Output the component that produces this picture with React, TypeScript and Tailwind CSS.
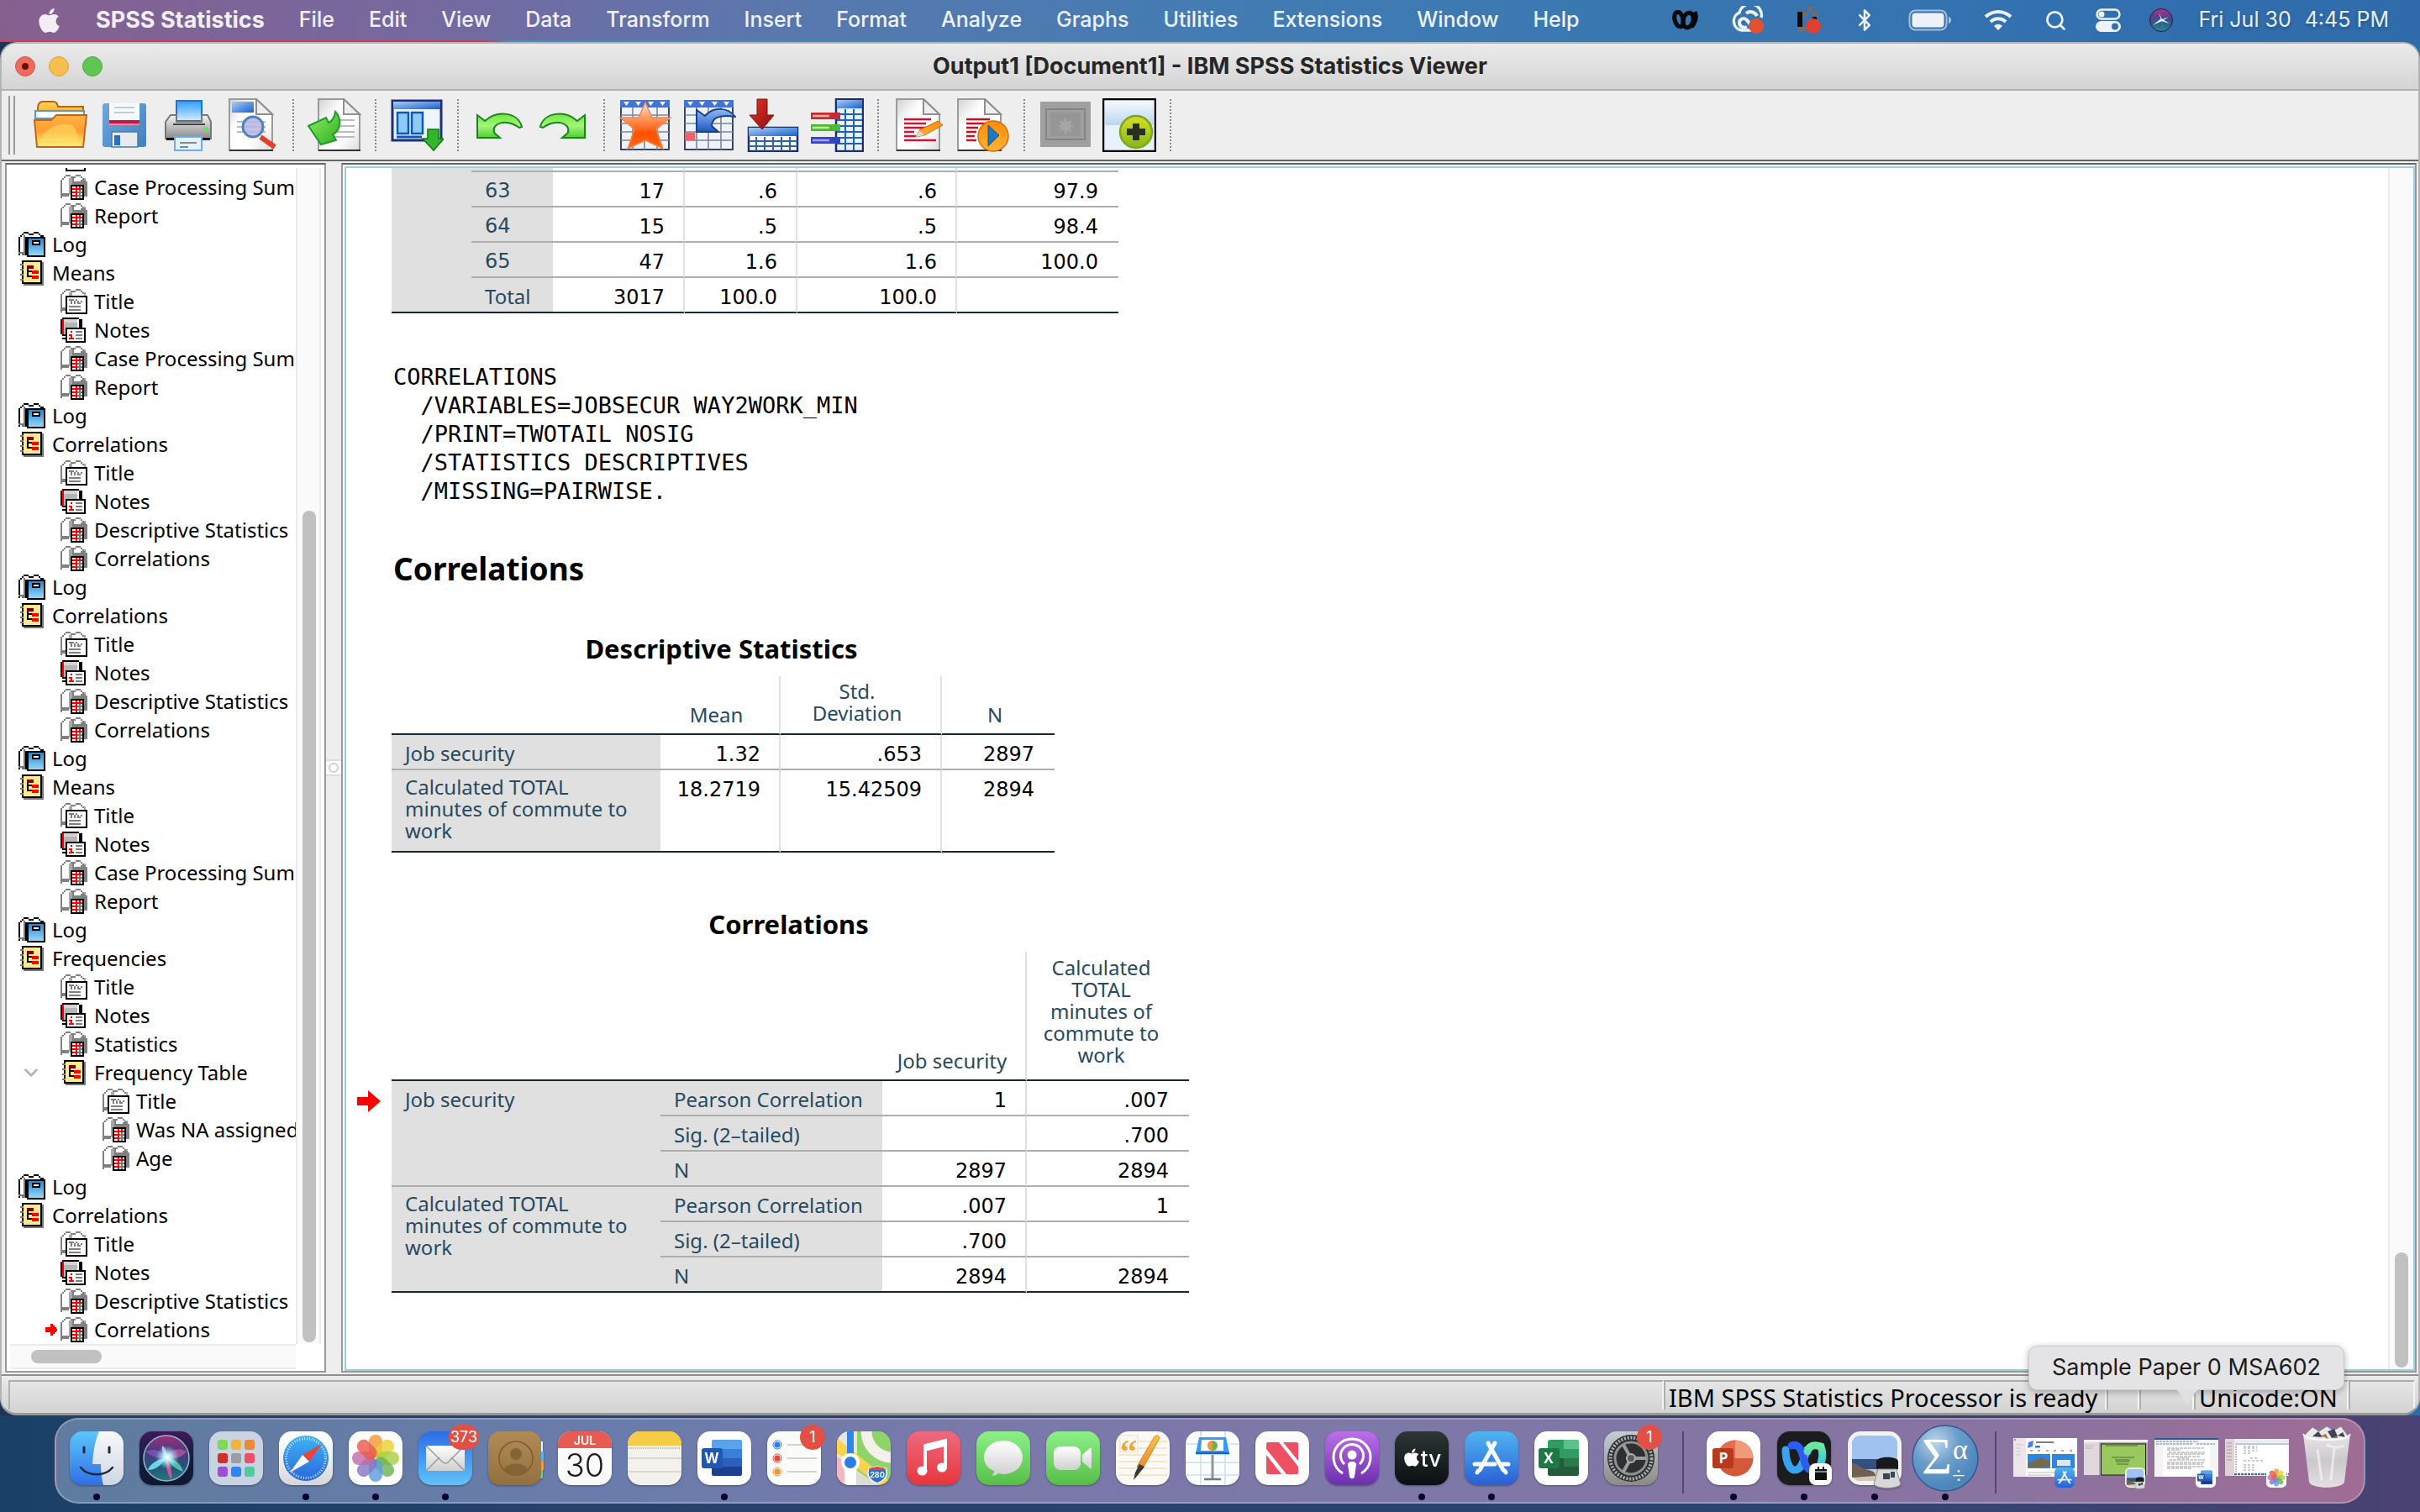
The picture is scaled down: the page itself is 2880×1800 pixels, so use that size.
import React from "react";
import { FaApple } from "react-icons/fa";
import { Bluetooth, Search, ChevronDown } from "lucide-react";

const SANS = "font-['Noto_Sans','DejaVu_Sans',sans-serif]";
const UI = "font-['Inter','Liberation_Sans',sans-serif]";
const NUM = "font-['DejaVu_Sans','Noto_Sans',sans-serif]";

function Grad({ id, stops, diag }: { id: string; stops: string[]; diag?: boolean }) {
  return (
    <linearGradient id={id} x1="0" y1="0" x2={diag ? "1" : "0"} y2="1">
      {stops.map((c, i) => (
        <stop key={i} offset={i / (stops.length - 1)} stopColor={c} />
      ))}
    </linearGradient>
  );
}

function Defs() {
  return (
    <svg width="0" height="0" className="absolute" aria-hidden="true">
      <defs>
        <Grad id="g-orange" stops={["#ffb347", "#ff9d2e", "#fff27a"]} />
        <Grad id="g-tab" stops={["#ffd75a", "#ff9a1f"]} />
        <Grad id="g-save" stops={["#6fa8dc", "#3f82bf"]} diag />
        <Grad id="g-page" stops={["#d0d0d0", "#ffffff", "#ffffff", "#dcdcdc"]} diag />
        <Grad id="g-blue" stops={["#8ecbff", "#2f8fe6"]} />
        <Grad id="g-bar" stops={["#a9cdf5", "#1761cf"]} diag />
        <Grad id="g-paper" stops={["#2f9bff", "#d7ecff"]} />
        <Grad id="g-green" stops={["#8cf05a", "#2fae28"]} diag />
        <Grad id="g-undo-arrow" stops={["#6fe83c", "#a4f57a", "#4fd02a"]} />
        <Grad id="g-star" stops={["#ffe9dd", "#ff9b63", "#ff5200", "#ff6a1a"]} />
        <Grad id="g-red" stops={["#e4342c", "#8d0f0b"]} diag />
        <Grad id="g-undo" stops={["#8fb8f2", "#1f56c4"]} />
        <Grad id="g-play" stops={["#ff8a00", "#ffb53a"]} />
        <Grad id="g-lime" stops={["#d5e021", "#86b81c"]} />
        <Grad id="g-sky" stops={["#f4f9ff", "#bcd6f0"]} />
        <Grad id="g-print" stops={["#f4f4f4", "#8a8a8a"]} />
        <Grad id="g-finder" stops={["#5cc6fa", "#2f6fe8"]} />
        <Grad id="g-face" stops={["#f7f8fa", "#cfd6e2"]} />
        <Grad id="g-siri" stops={["#3d1a5c", "#12203c", "#0d1730"]} />
        <Grad id="g-orb" stops={["#b8327f", "#5a3f92", "#2b5f8c", "#2a8f92"]} />
        <radialGradient id="g-glow">
          <stop offset="0" stopColor="#ffffff" />
          <stop offset=".35" stopColor="#c9fbff" stopOpacity=".85" />
          <stop offset="1" stopColor="#7fe9f0" stopOpacity="0" />
        </radialGradient>
        <Grad id="g-safari" stops={["#3fb3f5", "#2868dc"]} />
        <Grad id="g-white" stops={["#ffffff", "#f1f1f1", "#d6d6d6"]} />
        <Grad id="g-mail" stops={["#2e6ce6", "#5fc3f8"]} />
        <Grad id="g-env" stops={["#ffffff", "#cfcfcf"]} />
        <Grad id="g-brown" stops={["#b08b55", "#94703f"]} />
        <Grad id="g-music" stops={["#ef6a80", "#e6363c"]} />
        <Grad id="g-msg" stops={["#8cf089", "#57bf47"]} />
        <Grad id="g-pod" stops={["#bd6fe8", "#6d2fae"]} />
        <Grad id="g-tv" stops={["#2c3634", "#0b0f12"]} />
        <Grad id="g-store" stops={["#4fb5f0", "#2a5fd6"]} />
        <Grad id="g-gear" stops={["#c3cdd2", "#8b8a86"]} />
        <radialGradient id="g-sigma" cx=".35" cy=".25" r=".7">
          <stop offset="0" stopColor="#bcd6ec" />
          <stop offset=".5" stopColor="#6c9dcb" />
          <stop offset="1" stopColor="#4c86bb" />
        </radialGradient>
        <Grad id="g-webex2" stops={["#6fe89a", "#39c8e8"]} />
        <Grad id="g-log" stops={["#2f86cc", "#92d8fa"]} />
        <Grad id="g-pen" stops={["#ffc43a", "#e8862a"]} />
        <Grad id="g-trash" stops={["#efefef", "#cfcfcf", "#e8e8e8"]} />
      </defs>
    </svg>
  );
}

/* ---------- menu bar ---------- */

const MENUS = ["File", "Edit", "View", "Data", "Transform", "Insert", "Format", "Analyze", "Graphs", "Utilities", "Extensions", "Window", "Help"];

function MenuBar() {
  return (
    <header
      className={`flex h-12 shrink-0 items-center bg-[linear-gradient(100deg,#86608f_0%,#7569a0_18%,#5878ae_33%,#437cb3_50%,#3a78b1_66%,#3370b0_84%,#306cab_100%)] pl-[42px] pr-[37px] text-[25px] text-white/90 [text-shadow:0_2px_4px_rgba(0,0,0,0.3)] ${UI}`}
    >
      <button aria-label="Apple menu" className="mr-[39px]">
        <FaApple className="size-[33px] text-[#f3edf6]" />
      </button>
      <nav className="flex items-center gap-[41px]">
        <button className="text-[27px] font-bold">SPSS Statistics</button>
        {MENUS.map((m) => (
          <button key={m} className="font-medium">{m}</button>
        ))}
      </nav>
      <div className="ml-auto flex items-center gap-[38px]">
        <svg viewBox="0 0 32 24" className="h-6 w-8" fill="none" stroke="#05070c" strokeWidth="5">
          <ellipse cx="9" cy="11" rx="5" ry="9" transform="rotate(-14 9 11)" />
          <ellipse cx="20" cy="12" rx="6" ry="9" transform="rotate(14 20 12)" />
          <path d="M28 2c3 6 0 14-4 18" />
        </svg>
        <svg viewBox="0 0 42 34" className="h-[34px] w-[42px]" fill="none">
          <path d="M30 29H14a11 11 0 0 1-3-21A11 11 0 0 1 37 14" stroke="#eef2f8" strokeWidth="3.4" />
          <path d="M20 25c-5 2-9-1-9-5s5-7 9-3c3 3 4 7 7 8M19 9c5-4 11-1 13 3" stroke="#eef2f8" strokeWidth="4" />
          <circle cx="31" cy="24" r="9" fill="#e2522c" />
        </svg>
        <svg viewBox="0 0 28 34" className="h-[34px] w-7">
          <path d="M0 7h6v18H0zM18 13h5v9h-5z" fill="#0a0a0a" />
          <path d="M12 1h6v6h6v6h-6V7h-6zM6 7h6v6H6zM0 25h10v6H0z" fill="#6d6d6d" />
          <circle cx="19" cy="24" r="9" fill="#e0402f" />
        </svg>
        <Bluetooth className="size-7" strokeWidth={2.2} />
        <svg viewBox="0 0 52 26" className="h-[26px] w-[52px]">
          <rect x="1.5" y="1.5" width="44" height="23" rx="7" fill="none" stroke="#fff" strokeOpacity=".55" strokeWidth="2" />
          <rect x="4.5" y="4.5" width="38" height="17" rx="4" fill="#eef2f8" />
          <path d="M48 9c4 1 4 7 0 8z" fill="#fff" fillOpacity=".6" />
        </svg>
        <svg viewBox="0 0 34 26" className="h-[26px] w-[34px]" fill="none" stroke="#eef2f8" strokeWidth="4">
          <path d="M2 9c9-8 21-8 30 0" />
          <path d="M8 15c5-5 13-5 18 0" />
          <path d="M17 25l-5-5c3-3 7-3 10 0z" fill="#eef2f8" stroke="none" />
        </svg>
        <Search className="size-[27px]" strokeWidth={2.4} />
        <svg viewBox="0 0 30 28" className="-ml-1 h-7 w-[30px]">
          <rect x="1.5" y="1.5" width="27" height="11" rx="5.5" fill="none" stroke="#eef2f8" strokeWidth="2.4" />
          <circle cx="7" cy="7" r="3.5" fill="#eef2f8" />
          <rect y="15" width="30" height="13" rx="6.5" fill="#eef2f8" />
          <circle cx="23" cy="21.5" r="4" fill="#3570ab" />
        </svg>
        <svg viewBox="0 0 28 28" className="-ml-1 size-7">
          <circle cx="14" cy="14" r="13.5" fill="url(#g-orb)" stroke="#2b1d3c" />
          <path d="M4 20 14 12l10 6-10-3 3 11-3-12-3-9 4 8 8-3-8 5z" fill="#d6fbff" />
        </svg>
        <div className="-ml-2 flex gap-4">
          <span>Fri Jul 30</span>
          <span>4:45 PM</span>
        </div>
      </div>
    </header>
  );
}

/* ---------- toolbar ---------- */

const Page = ({ x = 8, w = 52 }: { x?: number; w?: number }) => (
  <g>
    <path d={`M${x} 1h${w - 20}l19 18v43h-${w - 1}z`} fill="url(#g-page)" stroke="#9b9b9b" strokeWidth="2" />
    <path d={`M${x + w - 20} 1v18h19z`} fill="#efefef" stroke="#8f8f8f" strokeWidth="2" />
    <path d={`M${x} 62h${w}`} stroke="#333" strokeWidth="2" />
  </g>
);

const GridSheet = () => (
  <g>
    <rect x="3" y="3" width="57" height="58" fill="#eef3fb" stroke="#3c465e" strokeWidth="2" />
    <path d="M3 30h57M3 40h57M3 50h57M17 11v50M31 11v50M46 11v50M3 20h57" stroke="#7d8797" strokeWidth="1.6" />
    <rect x="2" y="2" width="59" height="9" fill="#3f74dc" />
    <path d="M6 4h7l-3.500 5zM20 4h7l-3.500 5zM35 4h7l-3.500 5zM49 4h7l-3.500 5z" fill="#fff" />
  </g>
);

const UNDO_PATH = "M6 20v27h27l-7-6c-3-12 14-17 30-6l3-1C55 17 30 13 15 27z";

const TOOLS: Record<string, React.ReactNode> = {
  "Open": (
    <g>
      <path d="M5 12c0-6 3-8 6-8h12c4 0 5 2 6 6h30v14H5z" fill="url(#g-tab)" stroke="#b5651d" strokeWidth="2" />
      <path d="M2 15h58v9H2z" fill="#fff" stroke="#4a9be0" strokeWidth="2" />
      <path d="M1 26h20l6-6h36l-4 38H4z" fill="url(#g-orange)" stroke="#c2651a" strokeWidth="2" />
      <path d="M6 55C10 36 30 28 46 32c6 6 8 14 8 23z" fill="#ffe46a" opacity=".55" />
    </g>
  ),
  "Save": (
    <g>
      <rect x="6" y="6" width="52" height="52" rx="3" fill="url(#g-save)" />
      <rect x="14" y="6" width="36" height="26" fill="#f5fafd" />
      <path d="M20 11h24M20 17h24" stroke="#c4cbd1" strokeWidth="2" />
      <path d="M14 28h36" stroke="#cc1144" strokeWidth="4" />
      <path d="M14 31h36" stroke="#ec8fa6" strokeWidth="2" />
      <rect x="17" y="40" width="31" height="18" fill="#e8eaec" stroke="#447caf" strokeWidth="1.5" />
      <rect x="20" y="44" width="7" height="12" fill="#2f6fb5" />
    </g>
  ),
  "Print": (
    <g>
      <rect x="18" y="3" width="30" height="24" fill="url(#g-paper)" stroke="#1877d2" strokeWidth="2" />
      <path d="M11 20h7v8h30v-8h7l4 8v20H5V28z" fill="url(#g-print)" stroke="#777" strokeWidth="2" />
      <path d="M14 30h38v2H14z" fill="#444" />
      <path d="M6 47h52v3H6z" fill="#111" />
      <circle cx="53" cy="36" r="2" fill="#3f3" />
      <rect x="16" y="46" width="32" height="16" fill="#e6f1fb" stroke="#6faee5" strokeWidth="2" />
      <path d="M22 53h20M22 58h10" stroke="#7d8d9d" strokeWidth="2" />
    </g>
  ),
  "Print Preview": (
    <g>
      <Page x={5} w={52} />
      <rect x="8" y="4" width="26" height="13" fill="url(#g-bar)" />
      <path d="M14 28h34M14 34h34M14 40h34" stroke="#bbb" strokeWidth="2" />
      <path d="M42 46l17 12" stroke="#e0402c" strokeWidth="6" />
      <circle cx="33" cy="34" r="12" fill="#b9b5e4" fillOpacity=".85" stroke="#4d83bd" strokeWidth="3" />
    </g>
  ),
  "Export": (
    <g>
      <Page x={13} w={50} />
      <path d="M30 26h26M30 33h26M30 40h26M30 46h26" stroke="#bbb" strokeWidth="2" />
      <path d="M1 33 22 23l3 6c5-2 7-6 8-13 8 8 7 22-3 27l4 7-18 5z" fill="url(#g-green)" stroke="#1e9a2c" strokeWidth="2" />
    </g>
  ),
  "Recall Dialog": (
    <g>
      <rect x="3" y="3" width="58" height="47" fill="#edf6fe" stroke="#1c2f78" strokeWidth="3" />
      <rect x="4" y="4" width="56" height="9" fill="url(#g-bar)" />
      <path d="M9 17h13v25H9zM26 17h13v25H26z" fill="#8fcbf8" stroke="#0c59b8" strokeWidth="2.5" />
      <path d="M8 46h30" stroke="#0c59b8" strokeWidth="3" />
      <path d="M45 37h13v11h6L52 62 39 48h6z" fill="#35b52c" stroke="#0f7a10" strokeWidth="1.5" />
    </g>
  ),
  "Undo": <path d={UNDO_PATH} fill="url(#g-undo-arrow)" stroke="#16861c" strokeWidth="2" />,
  "Redo": <path d={UNDO_PATH} transform="matrix(-1 0 0 1 64 0)" fill="url(#g-undo-arrow)" stroke="#16861c" strokeWidth="2" />,
  "Go to Case": (
    <g>
      <GridSheet />
      <path d="M32 5l8 18h22L45 37l8 23-21-10-21 10 8-23L2 23h22z" fill="url(#g-star)" stroke="#f08850" strokeWidth="1.5" />
    </g>
  ),
  "Go to Data": (
    <g>
      <GridSheet />
      <rect x="3" y="41" width="12" height="9" fill="#f0616c" />
      <path d="M17 14v26h26l-8-7c0-10 10-14 28-11C54 10 37 10 27 21z" fill="url(#g-undo)" stroke="#17418f" strokeWidth="2" />
    </g>
  ),
  "Insert Cases": (
    <g>
      <rect x="3" y="35" width="58" height="28" fill="#fff" stroke="#1b2f6c" strokeWidth="2.5" />
      <rect x="3" y="35" width="58" height="10" fill="url(#g-bar)" />
      <path d="M3 51h58M3 57h58M12 46v17M22 46v17M32 46v17M42 46v17M52 46v17" stroke="#2d62b0" strokeWidth="2" />
      <path d="M13 1h12v19h8L19 37 4 20h9z" fill="url(#g-red)" stroke="#7b100c" />
    </g>
  ),
  "Variables": (
    <g>
      <rect x="31" y="1" width="32" height="62" fill="#e8f3ff" stroke="#1b2f6c" strokeWidth="2.5" />
      <rect x="32" y="2" width="30" height="10" fill="url(#g-bar)" />
      <path d="M32 19h30M32 26h30M32 33h30M32 40h30M32 47h30M32 54h30M42 13v49M52 13v49" stroke="#1f62bd" strokeWidth="2" />
      <rect x="1" y="17" width="35" height="8" fill="#c62a38" />
      <path d="M3 21h20" stroke="#f6b08a" strokeWidth="2.5" />
      <rect x="1" y="31" width="35" height="8" fill="#4cb92e" />
      <path d="M3 35h20" stroke="#b4f49c" strokeWidth="2.5" />
      <rect x="1" y="46" width="35" height="8" fill="#2f46c9" />
      <path d="M3 50h20" stroke="#b49cf4" strokeWidth="2.5" />
    </g>
  ),
  "Edit Script": (
    <g>
      <Page x={5} w={52} />
      <path d="M14 25h32M14 30h26M14 35h30M14 40h12M14 45h14M14 50h38" stroke="#d01236" strokeWidth="2.5" />
      <path d="M28 46l4-8 22-11 6 5-22 12z" fill="url(#g-play)" stroke="#cc6d14" />
      <path d="M28 46l4-8 6 6z" fill="#d8d8d8" />
    </g>
  ),
  "Run Script": (
    <g>
      <Page x={2} w={52} />
      <path d="M12 25h28M12 30h24M12 35h14M12 40h12M12 45h10M12 50h12" stroke="#c8101e" strokeWidth="2.5" />
      <circle cx="44" cy="45" r="18" fill="url(#g-play)" stroke="#d2700c" strokeWidth="1.5" />
      <path d="M38 32l13 12-13 13z" fill="#1f78bb" stroke="#0e568f" />
    </g>
  ),
  "Show Image": (
    <g>
      <rect x="2" y="4" width="60" height="54" fill="#9f9f9f" />
      <rect x="9" y="13" width="46" height="36" fill="none" stroke="#848484" strokeWidth="2" />
      <rect x="14" y="17" width="36" height="28" fill="#969696" />
      <path d="M32 22l2 6 6-2-3 5 6 2-6 2 3 5-6-2-2 6-2-6-6 2 3-5-6-2 6-2-3-5 6 2z" fill="#a6a6a6" />
    </g>
  ),
  "Designate Window": (
    <g>
      <rect x="1" y="1" width="62" height="62" fill="#e8f1fd" stroke="#000" strokeWidth="2.5" />
      <rect x="3" y="3" width="58" height="29" fill="url(#g-sky)" />
      <circle cx="40" cy="40" r="19" fill="url(#g-lime)" stroke="#7fa51b" strokeWidth="2.5" />
      <path d="M36 30h8v6h7v8h-7v6h-8v-6h-7v-8h7z" fill="#2a2d22" />
    </g>
  ),
};

const TOOL_GROUPS = [
  ["Open", "Save", "Print", "Print Preview"],
  ["Export"],
  ["Recall Dialog"],
  ["Undo", "Redo"],
  ["Go to Case", "Go to Data", "Insert Cases", "Variables"],
  ["Edit Script", "Run Script"],
  ["Show Image", "Designate Window"],
];

function Toolbar() {
  return (
    <div className="flex h-[82px] shrink-0 items-center gap-3 bg-[#eeeeee] pl-2" role="toolbar" aria-label="Output toolbar">
      <div className="mr-[10px] h-[70px] w-2 border-x-2 border-[#9a9a9a]" />
      {TOOL_GROUPS.map((group, gi) => (
        <React.Fragment key={gi}>
          {group.map((name) => (
            <button key={name} aria-label={name} className="size-16">
              <svg viewBox="0 0 64 64" className="size-16">{TOOLS[name]}</svg>
            </button>
          ))}
          <div className="mx-1 h-[62px] w-0 border-l-2 border-dotted border-[#8a8a8a]" />
        </React.Fragment>
      ))}
    </div>
  );
}

/* ---------- outline tree ---------- */

type Kind = "log" | "head" | "title" | "notes" | "table";

const binder = "M0 3h1v11H0zM1 2h1v1H1zM2 1h1v1H2zM3 0h3v1H3zM6 1h1v1H6zM9 0h3v1H9zM7 1h2v1H7zM12 1h1v1h-1zM13 2h2v1h-2z";

function TreeIcon({ kind }: { kind: Kind }) {
  return (
    <svg viewBox="0 0 16 15" className="h-[30px] w-8 shrink-0" shapeRendering="crispEdges" aria-hidden="true">
      {kind === "log" && (
        <g>
          <path d="M1 2h4v11H1z" fill="#fff" />
          <path d={binder} fill="#000" />
          <path d="M0 12h4v1H0zM2 13h3v1H2zM3 2h1v10H3z" fill="#777" />
          <path d="M4 3h12v12H5v-1H4z" fill="#000" />
          <path d="M6 4h9v10H6z" fill="url(#g-log)" />
          <path d="M8 5h5v3H8z" fill="#000" />
          <path d="M9 6h3v1H9z" fill="#fff" />
        </g>
      )}
      {kind === "head" && (
        <g>
          <path d="M3 1h12v14H3z" fill="#777" />
          <path d="M2 0h12v14H2z" fill="#000" />
          <path d="M3 1h10v12H3z" fill="#ffe88f" />
          <path d="M1 2h2v1H1zM1 5h2v1H1zM1 8h2v1H1zM1 11h2v1H1z" fill="#777" />
          <path d="M5 3h4v2H5z" fill="#800000" />
          <path d="M5 5h1v5H5zM6 6h2v1H6zM6 9h2v1H6z" fill="#000" />
          <path d="M8 6h4v2H8zM8 9h4v2H8z" fill="#f00" />
        </g>
      )}
      {(kind === "title" || kind === "table") && (
        <g>
          <path d={binder} fill="#808080" />
          <path d="M5 2h2v10H5zM14 2h1v3h-1z" fill="#a8a8a8" />
          <path d="M1 11h4v2H1z" fill="#808080" />
        </g>
      )}
      {kind === "title" && (
        <g>
          <path d="M3 4h13v11H3z" fill="#000" />
          <path d="M4 5h11v9H4z" fill="#fff" />
          <path d="M5 6h3v1H5zM6 7h1v2H6zM8 7h1v2H8zM9 6h1v1H9zM10 7h1v2h-1zM11 8h1v-1h1v1h-1v1h-1zM5 10h7v1H5zM5 12h7v1H5z" fill="#808080" />
        </g>
      )}
      {kind === "table" && (
        <g>
          <path d="M8 4h8v9H8zM7 2h1v8H7zM12 3h3v1h-3z" fill="#808080" />
          <path d="M6 6h8v9H6z" fill="#000" />
          <path d="M7 7h6v7H7z" fill="#fff" />
          <path d="M7 8h6v1H7zM9 7h1v7H9zM7 10h2v1H7zM7 12h2v1H7zM11 7h1v1h-1z" fill="#f00" />
          <path d="M11 9h1v5h-1zM10 10h3v1h-3zM10 12h3v1h-3z" fill="#777" />
        </g>
      )}
      {kind === "notes" && (
        <g>
          <path d="M0 1h1v9H0zM1 0h10v1H1zM11 1h2v5h-2zM1 10h3v1H1zM1 12h2v1H1z" fill="#000" />
          <path d="M1 1h1v9H1z" fill="#f00" />
          <path d="M2 1h8v2H2z" fill="#d8d2d2" />
          <path d="M2 3h8v7H2z" fill="#b5b5b5" />
          <path d="M3 6h12v9H3z" fill="#000" />
          <path d="M4 7h10v7H4z" fill="#fff" />
          <path d="M6 8h1v1H6zM5 10h2v2h1v1H5v-1h1v-1H5z" fill="#f00" />
          <path d="M9 8h4v1H9zM9 10h4v1H9zM9 12h4v1H9z" fill="#808080" />
        </g>
      )}
    </svg>
  );
}

type Node = { label: string; kind: Kind; level: number; open?: boolean; current?: boolean };

const n = (label: string, kind: Kind, level: number, extra: Partial<Node> = {}): Node => ({ label, kind, level, ...extra });
const LOG = n("Log", "log", 0);
const meansBlock = [n("Means", "head", 0), n("Title", "title", 1), n("Notes", "notes", 1), n("Case Processing Sum", "table", 1), n("Report", "table", 1)];
const corrBlock = (current = false) => [
  n("Correlations", "head", 0),
  n("Title", "title", 1),
  n("Notes", "notes", 1),
  n("Descriptive Statistics", "table", 1),
  n("Correlations", "table", 1, { current }),
];

const TREE: Node[] = [
  n("", "notes", 1),
  n("Case Processing Sum", "table", 1),
  n("Report", "table", 1),
  LOG,
  ...meansBlock,
  LOG,
  ...corrBlock(),
  LOG,
  ...corrBlock(),
  LOG,
  ...meansBlock,
  LOG,
  n("Frequencies", "head", 0),
  n("Title", "title", 1),
  n("Notes", "notes", 1),
  n("Statistics", "table", 1),
  n("Frequency Table", "head", 1, { open: true }),
  n("Title", "title", 2),
  n("Was NA assigned", "table", 2),
  n("Age", "table", 2),
  LOG,
  ...corrBlock(true),
];

function TreeRow({ node }: { node: Node }) {
  const pad = node.level === 0 ? "pl-[10px]" : node.level === 1 ? "pl-[60px]" : "pl-[110px]";
  return (
    <li className={`relative flex h-[34px] shrink-0 items-center gap-2 whitespace-nowrap ${pad}`}>
      {node.open && <ChevronDown className="absolute left-3 size-[26px] text-[#b4b4b4]" strokeWidth={2.5} />}
      {node.current && (
        <svg viewBox="0 0 14 14" className="absolute left-[42px] size-[14px]" shapeRendering="crispEdges">
          <path d="M0 4h6V0h3v2h2v2h2v2h1v2h-1v2h-2v2H9v2H6v-4H0z" fill="#f00" />
        </svg>
      )}
      <TreeIcon kind={node.kind} />
      <span>{node.label}</span>
    </li>
  );
}

function Outline() {
  return (
    <aside className="flex w-[382px] shrink-0 flex-col border-2 border-t-2 border-[#999999] border-t-[#666666] bg-white pb-[2px] pl-1 pr-1 pt-1">
      <div className="flex min-h-0 flex-1">
        <ul className="flex min-w-0 flex-1 flex-col justify-end overflow-hidden text-2xl text-black">
          {TREE.map((t, i) => (
            <TreeRow key={i} node={t} />
          ))}
        </ul>
        <div className="flex w-[30px] shrink-0 flex-col justify-end border-x-2 border-[#ebebeb] bg-[#fafafa] pb-[2px] pl-[6px]">
          <div className="h-[990px] w-4 rounded-full bg-[#c1c1c1]" />
        </div>
      </div>
      <div className="mr-[30px] flex h-[30px] shrink-0 items-center border-y-2 border-[#ebebeb] bg-[#fafafa] pl-[25px]">
        <div className="h-4 w-[84px] rounded-full bg-[#c1c1c1]" />
      </div>
    </aside>
  );
}

/* ---------- output tables ---------- */

const GREY = "bg-[#e0e0e0] text-[#264a60]";
const LINE = "border-b-2 border-b-[#aeaeae]";
const DARK = "border-b-2 border-b-[#152935]";
const VR = "border-r-2 border-r-[#e0e0e0]";
const LABEL = "pl-4 pt-[9px] text-left align-top font-normal";
const LABEL_MULTI = "pl-4 pt-[7px] text-left align-top font-normal";

function NumCell({ children, last, bottom }: { children?: React.ReactNode; last?: boolean; bottom?: boolean }) {
  return (
    <td className={`pt-[10px] text-right align-top text-black ${NUM} ${last ? "pr-6" : `pr-[22px] ${VR}`} ${bottom ? DARK : LINE}`}>
      {children}
    </td>
  );
}

function Frequencies() {
  const rows = [
    ["63", "17", ".6", ".6", "97.9"],
    ["64", "15", ".5", ".5", "98.4"],
    ["65", "47", "1.6", "1.6", "100.0"],
    ["Total", "3017", "100.0", "100.0", ""],
  ];
  return (
    <table className="w-[865px] table-fixed border-separate border-spacing-0 text-2xl leading-[26px]" aria-label="Age">
      <colgroup>
        <col className="w-[95px]" />
        <col className="w-[97px]" />
        <col className="w-[157px]" />
        <col className="w-[134px]" />
        <col className="w-[190px]" />
        <col className="w-[192px]" />
      </colgroup>
      <tbody>
        <tr className="h-[5px]">
          <td className={GREY} />
          <td className={`${GREY} ${LINE}`} />
          <td className={`${VR} ${LINE}`} />
          <td className={`${VR} ${LINE}`} />
          <td className={`${VR} ${LINE}`} />
          <td className={LINE} />
        </tr>
        {rows.map((r, i) => {
          const bottom = i === rows.length - 1;
          return (
            <tr key={r[0]} className="h-[42px]">
              <td className={`${GREY} ${bottom ? DARK : ""}`} />
              <th className={`${LABEL} ${GREY} ${bottom ? DARK : LINE} ${bottom ? "" : NUM}`}>{r[0]}</th>
              {r.slice(1).map((v, j) => (
                <NumCell key={j} last={j === 3} bottom={bottom}>{v}</NumCell>
              ))}
            </tr>
          );
        })}
      </tbody>
    </table>
  );
}

const CAPTION = "pb-[13px] pr-1 text-center text-[31px] font-bold leading-10 text-black";
const HEADCELL = "text-center align-bottom font-normal text-[#264a60]";

function Descriptives() {
  return (
    <table className="mt-[51px] w-[789px] table-fixed border-separate border-spacing-0 text-2xl leading-[26px]">
      <caption className={CAPTION}>Descriptive Statistics</caption>
      <colgroup>
        <col className="w-[320px]" />
        <col className="w-[143px]" />
        <col className="w-[192px]" />
        <col className="w-[134px]" />
      </colgroup>
      <thead>
        <tr className="h-[70px]">
          <td className={DARK} />
          <th className={`pb-[9px] pr-2 ${HEADCELL} ${DARK} ${VR}`}>Mean</th>
          <th className={`pb-[11px] pr-2 ${HEADCELL} ${DARK} ${VR}`}>Std.<br />Deviation</th>
          <th className={`pb-[9px] pr-2 ${HEADCELL} ${DARK}`}>N</th>
        </tr>
      </thead>
      <tbody>
        <tr className="h-[42px]">
          <th className={`${LABEL} ${GREY} ${LINE}`}>Job security</th>
          <NumCell>1.32</NumCell>
          <NumCell>.653</NumCell>
          <NumCell last>2897</NumCell>
        </tr>
        <tr className="h-[98px]">
          <th className={`${LABEL_MULTI} ${GREY} ${DARK}`}>Calculated TOTAL<br />minutes of commute to<br />work</th>
          <NumCell bottom>18.2719</NumCell>
          <NumCell bottom>15.42509</NumCell>
          <NumCell last bottom>2894</NumCell>
        </tr>
      </tbody>
    </table>
  );
}

function Correlations() {
  const groups = [
    { label: <>Job security</>, cls: LABEL, rows: [["Pearson Correlation", "1", ".007"], ["Sig. (2–tailed)", "", ".700"], ["N", "2897", "2894"]] },
    {
      label: <>Calculated TOTAL<br />minutes of commute to<br />work</>,
      cls: LABEL_MULTI,
      rows: [["Pearson Correlation", ".007", "1"], ["Sig. (2–tailed)", ".700", ""], ["N", "2894", "2894"]],
    },
  ];
  return (
    <div className="relative mt-[65px] w-fit">
      <table className="w-[949px] table-fixed border-separate border-spacing-0 text-2xl leading-[26px]">
        <caption className={CAPTION}>Correlations</caption>
        <colgroup>
          <col className="w-[320px]" />
          <col className="w-[264px]" />
          <col className="w-[172px]" />
          <col className="w-[193px]" />
        </colgroup>
        <thead>
          <tr className="h-[154px]">
            <td className={DARK} />
            <td className={DARK} />
            <th className={`pb-[9px] pr-1 ${HEADCELL} ${DARK} ${VR}`}>Job security</th>
            <th className={`pb-4 pr-4 ${HEADCELL} ${DARK}`}>Calculated<br />TOTAL<br />minutes of<br />commute to<br />work</th>
          </tr>
        </thead>
        <tbody>
          {groups.map((g, gi) =>
            g.rows.map((r, ri) => {
              const bottom = gi === 1 && ri === 2;
              return (
                <tr key={`${gi}-${ri}`} className="h-[42px]">
                  {ri === 0 && (
                    <th rowSpan={3} className={`${g.cls} ${GREY} ${gi === 1 ? DARK : LINE}`}>{g.label}</th>
                  )}
                  <th className={`${LABEL} ${GREY} ${bottom ? DARK : LINE}`}>{r[0]}</th>
                  <NumCell bottom={bottom}>{r[1]}</NumCell>
                  <NumCell last bottom={bottom}>{r[2]}</NumCell>
                </tr>
              );
            })
          )}
        </tbody>
      </table>
      <svg viewBox="0 0 28 26" className="absolute -left-[41px] top-[218px] h-[26px] w-7" aria-label="Current item">
        <path d="M0 8h13V0l15 13-15 13v-8H0z" fill="#f00" />
      </svg>
    </div>
  );
}

const SYNTAX = `CORRELATIONS
  /VARIABLES=JOBSECUR WAY2WORK_MIN
  /PRINT=TWOTAIL NOSIG
  /STATISTICS DESCRIPTIVES
  /MISSING=PAIRWISE.`;

function Output() {
  return (
    <main className="flex min-w-0 flex-1 border-2 border-[#999999] border-t-[#666666] bg-white pt-[2px] pl-[2px]">
      <div className="flex min-w-0 flex-1 border-2 border-[#9ccde3]">
        <div className="min-w-0 flex-1 overflow-hidden pl-[54px]">
          <Frequencies />
          <pre className="mt-[59px] pl-[2px] font-['DejaVu_Sans_Mono','Liberation_Mono',monospace] text-[27px] leading-[34px] text-black">{SYNTAX}</pre>
          <h1 className="mt-[51px] pl-[2px] text-[37px] font-bold leading-[48px] text-black">Correlations</h1>
          <Descriptives />
          <Correlations />
        </div>
        <div className="flex w-[30px] shrink-0 flex-col justify-end border-l-2 border-[#ebebeb] bg-[#fafafa] pb-[2px] pl-[6px]">
          <div className="h-[137px] w-4 rounded-full bg-[#c1c1c1]" />
        </div>
      </div>
    </main>
  );
}

/* ---------- status bar ---------- */

function StatusBar() {
  const cell = "flex shrink-0 items-center whitespace-nowrap border-l-2 border-t-2 border-r-2 border-l-[#b0b0b0] border-r-[#f4f4f4] border-t-[#ababab] pl-1 pt-1";
  return (
    <footer className="flex h-11 shrink-0 bg-[linear-gradient(#ededed,#e2e2e2_30%,#d3d3d3)] pb-1 pl-2 pr-1 pt-[5px] text-[29px] leading-7 text-black">
      <div className={`${cell} min-w-0 grow`} />
      <div className={`${cell} w-[527px]`}>IBM SPSS Statistics Processor is ready</div>
      <div className={`${cell} w-[39px]`} />
      <div className={`${cell} w-[65px]`} />
      <div className={`${cell} w-[184px]`}>Unicode:ON</div>
      <div className={`${cell} w-[79px]`} />
    </footer>
  );
}

/* ---------- dock ---------- */

const T = ({ fill }: { fill: string }) => <rect width="64" height="64" rx="15" fill={fill} />;

const PETALS = ["#f29a35", "#ecd136", "#a9cf45", "#6fb356", "#5f9edb", "#8577c8", "#c46aa6", "#ea5a4c"];
const Flower = () => (
  <g>
    {PETALS.map((c, i) => (
      <rect key={c} x="24" y="4" width="16" height="27" rx="8" fill={c} fillOpacity=".82" transform={`rotate(${i * 45} 32 32)`} />
    ))}
  </g>
);

const AStore = () => (
  <g stroke="#f4faff" strokeWidth="5" strokeLinecap="round">
    <path d="M36 14 18 46M28 14l18 32M12 39h24M44 39h8M15 49l1-2M49 49l-1-2" />
  </g>
);

const WordMark = () => (
  <g>
    <rect x="17" y="10" width="36" height="43" rx="3" fill="#2b61bd" />
    <path d="M17 13a3 3 0 0 1 3-3h30a3 3 0 0 1 3 3v8H17z" fill="#5aa3ea" />
    <path d="M17 21h36v11H17z" fill="#3a7fd6" />
    <path d="M17 42h36v8a3 3 0 0 1-3 3H20a3 3 0 0 1-3-3z" fill="#1c3f8f" />
    <rect x="5" y="20" width="25" height="24" rx="3" fill="#1f57b5" />
    <text x="17" y="38" textAnchor="middle" fontSize="17" fontWeight="700" fill="#fff" fontFamily="Open Sans, sans-serif">W</text>
  </g>
);

type DockItem = { name: string; art: React.ReactNode; dot?: boolean; badge?: string };

const APPS: DockItem[] = [
  {
    name: "Finder",
    dot: true,
    art: (
      <g>
        <T fill="url(#g-finder)" />
        <path d="M35 0h14a15 15 0 0 1 15 15v34a15 15 0 0 1-15 15H40c-2-8-3-15-3-25H27C28 24 30 11 35 0z" fill="url(#g-face)" />
        <path d="M17 19v6M47 19v6" stroke="#1b2b44" strokeWidth="3" strokeLinecap="round" />
        <path d="M13 43c9 11 29 11 38 0" fill="none" stroke="#1b2b44" strokeWidth="2.5" strokeLinecap="round" />
      </g>
    ),
  },
  {
    name: "Siri",
    art: (
      <g>
        <T fill="url(#g-siri)" />
        <circle cx="32" cy="32" r="27" fill="url(#g-orb)" fillOpacity=".8" stroke="#9ab4cc" strokeWidth="1.5" />
        <path d="M32 30C25 22 15 20 8 24c8 8 16 8 24 8z" fill="#8f5fd0" fillOpacity=".6" />
        <path d="M32 30c6-9 15-11 24-6-5 7-14 9-24 8z" fill="#d85fa8" fillOpacity=".6" />
        <path d="M33 31c8 1 17 8 19 17-9-3-16-9-19-17z" fill="#5fe0b8" fillOpacity=".75" />
        <path d="M31 32c-6 9-12 14-21 14 3-8 12-13 21-14z" fill="#6fe6ee" fillOpacity=".9" />
        <path d="M32 32c5 8 7 17 6 26-5-7-7-17-6-26z" fill="#f0539a" fillOpacity=".85" />
        <path d="M27 17c5 3 6 9 5 15-4-4-6-9-5-15z" fill="#cfeeff" fillOpacity=".7" />
        <circle cx="33" cy="31" r="14" fill="url(#g-glow)" />
      </g>
    ),
  },
  {
    name: "Launchpad",
    art: (
      <g>
        <T fill="#cad3e2" />
        {["#7fd957", "#f0b33c", "#e98a35", "#d0302c", "#9a9da2", "#ee4f67", "#9a4fd6", "#2f86f2", "#53c9a0"].map((c, i) => (
          <rect key={c} x={10 + (i % 3) * 16} y={10 + Math.floor(i / 3) * 16} width="12" height="12" rx="3" fill={c} />
        ))}
      </g>
    ),
  },
  {
    name: "Safari",
    dot: true,
    art: (
      <g>
        <T fill="url(#g-white)" />
        <circle cx="32" cy="32" r="27" fill="url(#g-safari)" />
        <circle cx="32" cy="32" r="23.5" fill="none" stroke="#cfe8fb" strokeWidth="3" strokeDasharray="1 2" />
        <path d="M51 15 28 28l8 8z" fill="#ee4436" />
        <path d="M13 49l15-21 8 8z" fill="#f7f7f7" />
      </g>
    ),
  },
  { name: "Photos", dot: true, art: <g><T fill="#fdfdfd" /><Flower /></g> },
  {
    name: "Mail",
    dot: true,
    badge: "373",
    art: (
      <g>
        <T fill="url(#g-mail)" />
        <rect x="9" y="17" width="46" height="30" rx="3" fill="url(#g-env)" />
        <path d="M10 46l15-15M54 46 39 31M10 18l17 17c4 4 7 4 10 0l17-17" fill="none" stroke="#9d9d9d" strokeWidth="1.5" />
      </g>
    ),
  },
  {
    name: "Contacts",
    art: (
      <g>
        <path d="M58 12h7v12h-7z" fill="#eee" /><path d="M58 24h8v12h-8z" fill="#58b4ee" /><path d="M58 36h8v10h-8z" fill="#f09a3a" /><path d="M58 46h7v10h-7z" fill="#6bd06a" />
        <rect width="63" height="64" rx="14" fill="url(#g-brown)" />
        <circle cx="33" cy="32" r="20" fill="none" stroke="#7b5c31" strokeWidth="1.5" />
        <circle cx="33" cy="27" r="7" fill="#846437" />
        <path d="M19 46c3-10 25-10 28 0-8 8-20 8-28 0z" fill="#846437" />
      </g>
    ),
  },
  {
    name: "Calendar",
    art: (
      <g>
        <T fill="#fafafa" />
        <path d="M0 20v-5A15 15 0 0 1 15 0h34a15 15 0 0 1 15 15v5z" fill="#e65c52" />
        <text x="32" y="16" textAnchor="middle" fontSize="14" fontWeight="600" fill="#fff" fontFamily="Inter, sans-serif">JUL</text>
        <text x="32" y="54" textAnchor="middle" fontSize="38" fontWeight="300" fill="#1c1c1c" fontFamily="Inter, sans-serif">30</text>
      </g>
    ),
  },
  {
    name: "Notes",
    art: (
      <g>
        <T fill="#f3f1ec" />
        <path d="M0 17v-2A15 15 0 0 1 15 0h34a15 15 0 0 1 15 15v2z" fill="#f8cb45" />
        <path d="M1 20h62" stroke="#9c9685" strokeWidth="1.5" strokeDasharray="1 1.5" />
        <path d="M0 32h64M0 48h64" stroke="#d2cfc8" strokeWidth="1.5" />
      </g>
    ),
  },
  { name: "Word", dot: true, art: <g><T fill="#fff" /><WordMark /></g> },
  {
    name: "Reminders",
    badge: "1",
    art: (
      <g>
        <T fill="#fbfbfa" />
        {["#2f7cf0", "#e8453c", "#f0953a"].map((c, i) => (
          <g key={c}>
            <circle cx="12" cy={16 + i * 16} r="5" fill="none" stroke={c} strokeWidth="1" />
            <circle cx="12" cy={16 + i * 16} r="3.5" fill={c} />
            <path d={`M24 ${16 + i * 16}h35`} stroke="#c6c6c6" strokeWidth="1.5" />
          </g>
        ))}
      </g>
    ),
  },
  {
    name: "Maps",
    art: (
      <g>
        <clipPath id="c-map"><rect width="64" height="64" rx="15" /></clipPath>
        <g clipPath="url(#c-map)">
          <rect width="64" height="64" fill="#8fd46a" />
          <path d="M0 0h24v64H0z" fill="#e8e6df" />
          <path d="M0 8l64 52v14L0 26z" fill="#fbd34c" />
          <path d="M0 30l12 8v26H0z" fill="#f5b6c4" />
          <path d="M23 46l26 18H23z" fill="#dedbd4" />
          <circle cx="66" cy="0" r="31" fill="none" stroke="#f3f1ea" strokeWidth="13" />
          <path d="M9 30h14v34H9z" fill="#fff" />
          <path d="M12 0h8v32h-8z" fill="#2f86ea" />
          <circle cx="16" cy="37" r="11" fill="#fff" />
          <circle cx="16" cy="37" r="7" fill="#2f7be6" />
          <path d="M38 44c4 0 7-2 10-2s6 2 10 2c3 8 0 14-10 18-10-4-13-10-10-18z" fill="#2d6fd0" stroke="#fff" strokeWidth="1.5" />
          <path d="M38 46c0-3 5-3 10-4 5 1 10 1 10 4z" fill="#e0463c" />
          <text x="48" y="55" textAnchor="middle" fontSize="9" fontWeight="700" fill="#fff" fontFamily="Inter, sans-serif">280</text>
        </g>
      </g>
    ),
  },
  {
    name: "Music",
    art: (
      <g>
        <T fill="url(#g-music)" />
        <path d="M22 45V17l24-6v30" fill="none" stroke="#fff" strokeWidth="4" />
        <path d="M22 20l24-6" stroke="#fff" strokeWidth="7" />
        <ellipse cx="18.5" cy="47" rx="6" ry="5.5" fill="#fff" />
        <ellipse cx="42" cy="43" rx="6" ry="5.5" fill="#fff" />
      </g>
    ),
  },
  {
    name: "Messages",
    art: (
      <g>
        <T fill="url(#g-msg)" />
        <path d="M32 11c13 0 23 9 23 20S45 51 32 51l-6-1c-2 2-5 3-8 3 2-2 3-4 3-6C13 44 9 38 9 31c0-11 10-20 23-20z" fill="url(#g-env)" />
      </g>
    ),
  },
  {
    name: "FaceTime",
    art: (
      <g>
        <T fill="url(#g-msg)" />
        <rect x="9" y="18" width="32" height="28" rx="8" fill="url(#g-env)" />
        <path d="M43 28l9-8c1-1 2 0 2 1v22c0 1-1 2-2 1l-9-8z" fill="url(#g-env)" />
      </g>
    ),
  },
  {
    name: "Pages",
    art: (
      <g>
        <T fill="#fbfaf6" />
        <path d="M3 12h58M3 20h58M3 28h58M3 36h58M3 44h58M3 52h58" stroke="#f3dfb5" strokeWidth="1.5" />
        <rect x="5" y="5" width="21" height="20" fill="#fbfaf6" stroke="#f3dfb5" />
        <text x="15" y="38" textAnchor="middle" fontSize="41" fontWeight="700" fill="#eca73c" fontFamily="Liberation Serif, serif">“</text>
        <path d="M46 6c2-2 6-1 6 2L31 46l-6-4z" fill="url(#g-pen)" stroke="#b8742c" strokeWidth=".8" />
        <path d="M28 39l6 3-7 9-6 7 2-9z" fill="#39393b" />
      </g>
    ),
  },
  {
    name: "Keynote",
    art: (
      <g>
        <T fill="#fbfcfe" />
        <path d="M18 0v64M47 0v64M0 15h64M0 37h64M0 52h64" stroke="#c9def2" strokeWidth="1.5" />
        <path d="M16 7h32l4 19H12z" fill="#3a9af2" />
        <path d="M19 10h26v13H18z" fill="#fff" />
        <circle cx="32" cy="17" r="6" fill="#58b957" /><path d="M32 11a6 6 0 0 0 0 12z" fill="#f09b38" />
        <path d="M12 26h40" stroke="#1b62bb" strokeWidth="2.5" />
        <path d="M32 28v28" stroke="#8d969e" strokeWidth="3" />
        <path d="M22 57h20" stroke="#70777e" strokeWidth="2.5" />
      </g>
    ),
  },
  {
    name: "News",
    art: (
      <g>
        <T fill="#fdfdfd" />
        <path d="M15 13h13l23 29v7a2 2 0 0 1-2 2H37L13 21v-6a2 2 0 0 1 2-2z" fill="#ee4f62" />
        <path d="M33 13h16a2 2 0 0 1 2 2v20zM13 28l18 23H15a2 2 0 0 1-2-2z" fill="#ee4f62" />
      </g>
    ),
  },
  {
    name: "Podcasts",
    art: (
      <g>
        <T fill="url(#g-pod)" />
        <path d="M21 50a22 22 0 1 1 22 0" fill="none" stroke="#fff" strokeWidth="3" />
        <path d="M23 39a13.500 13.500 0 1 1 18 0" fill="none" stroke="#fff" strokeWidth="3" />
        <circle cx="32" cy="28" r="5.5" fill="#fff" />
        <path d="M27 39c0-4 10-4 10 0l-2 15c-1 3-5 3-6 0z" fill="#fff" />
      </g>
    ),
  },
  {
    name: "Apple TV",
    dot: true,
    art: (
      <g>
        <T fill="url(#g-tv)" />
        <FaApple x="8" y="19" width="22" height="24" size={24} color="#fff" />
        <text x="43" y="42" textAnchor="middle" fontSize="26" fontWeight="500" fill="#fff" fontFamily="Inter, sans-serif">tv</text>
      </g>
    ),
  },
  { name: "App Store", dot: true, art: <g><T fill="url(#g-store)" /><AStore /></g> },
  {
    name: "Excel",
    art: (
      <g>
        <T fill="#fff" />
        <rect x="16" y="10" width="37" height="43" rx="3" fill="#2f9c62" />
        <path d="M35 10h15a3 3 0 0 1 3 3v8H35z" fill="#5cc08a" />
        <path d="M16 32h19v21H19a3 3 0 0 1-3-3z" fill="#245c3c" />
        <path d="M35 32h18v10H35z" fill="#2a7a4c" />
        <path d="M35 42h18v8a3 3 0 0 1-3 3H35z" fill="#245c3c" />
        <rect x="5" y="20" width="25" height="24" rx="3" fill="#1e7a45" />
        <text x="17" y="38" textAnchor="middle" fontSize="17" fontWeight="700" fill="#fff" fontFamily="Open Sans, sans-serif">X</text>
      </g>
    ),
  },
  {
    name: "System Preferences",
    badge: "1",
    art: (
      <g>
        <T fill="url(#g-gear)" />
        <circle cx="32" cy="32" r="28" fill="#2e2f31" />
        <circle cx="32" cy="32" r="24.5" fill="none" stroke="#a9abad" strokeWidth="4" strokeDasharray="2.2 1.6" />
        <circle cx="32" cy="32" r="19" fill="none" stroke="#8d8f91" strokeWidth="3" />
        <path d="M32 32h18M32 32 23 48M32 32 23 16" stroke="#9b9da0" strokeWidth="4" />
        <circle cx="32" cy="32" r="5" fill="#5a5b5d" stroke="#b0b2b4" strokeWidth="2" />
      </g>
    ),
  },
];

const PreviewArt = () => (
  <g>
    <T fill="#f2f2f2" />
    <rect x="5" y="5" width="54" height="54" rx="9" fill="#9fc2f0" />
    <path d="M5 33h54v12H5z" fill="#33507f" />
    <path d="M5 45h54v5a9 9 0 0 1-9 9H14a9 9 0 0 1-9-9z" fill="#cfc8bc" />
    <path d="M5 38c8 0 10 6 16 7s12 3 12 8l-28 2z" fill="#6e6152" />
    <path d="M34 36c0-7 26-7 26 0v9H34z" fill="#17191c" />
    <path d="M36 45h22l5 18c-4 6-28 6-32 0z" fill="#d8d9d6" stroke="#8e8f8d" />
    <path d="M42 50h8v7h-8zM51 48h5v7h-5z" fill="#3c4654" />
  </g>
);

const APPS2: DockItem[] = [
  {
    name: "PowerPoint",
    dot: true,
    art: (
      <g>
        <T fill="#fff" />
        <circle cx="34" cy="32" r="21.5" fill="#d5583a" />
        <path d="M34 10.500A21.500 21.500 0 0 1 55.500 32H34z" fill="#f09a7c" />
        <path d="M12.500 32a21.500 21.500 0 0 1 21.500-21.500V32z" fill="#e66c4c" />
        <rect x="7" y="20" width="25" height="24" rx="3" fill="#b9391e" />
        <text x="20" y="38" textAnchor="middle" fontSize="18" fontWeight="700" fill="#fff" fontFamily="Open Sans, sans-serif">P</text>
      </g>
    ),
  },
  {
    name: "Webex Meetings",
    dot: true,
    art: (
      <g>
        <T fill="#1a1c1e" />
        <path d="M10 22c0 12 4 24 11 24 9 0 11-14 14-24" fill="none" stroke="#38a4f0" strokeWidth="9" strokeLinecap="round" />
        <path d="M17 17c8-3 12 5 14 14s5 15 10 15" fill="none" stroke="#2f5cf0" strokeWidth="9" strokeLinecap="round" />
        <path d="M36 24c2-7 8-9 16-6 3 8 2 14 0 20" fill="none" stroke="url(#g-webex2)" strokeWidth="9" strokeLinecap="round" />
        <rect x="38" y="38" width="27" height="26" rx="8" fill="#fff" />
        <path d="M45 45h14v13H45zM48 42h2v4h-2zM54 42h2v4h-2z" fill="#111" />
        <path d="M45 48h14" stroke="#fff" />
      </g>
    ),
  },
  { name: "Preview", dot: true, art: <PreviewArt /> },
];

function Dot() {
  return <span className="absolute left-1/2 top-[74px] size-2 -translate-x-1/2 rounded-full bg-[#08002c]" />;
}

function DockApp({ app }: { app: DockItem }) {
  return (
    <button aria-label={app.name} className="relative size-16 shrink-0">
      <svg viewBox="0 0 64 64" className="size-16 overflow-visible drop-shadow-[0_1px_1px_rgba(0,0,0,0.35)]">{app.art}</svg>
      {app.badge && (
        <span className={`absolute left-[54px] top-[7px] flex h-[30px] min-w-[30px] -translate-x-1/2 -translate-y-1/2 items-center justify-center rounded-full bg-[#e14f45] px-[2px] text-lg leading-none text-white ${UI}`}>
          {app.badge}
        </span>
      )}
      {app.dot && <Dot />}
    </button>
  );
}

const THUMBS: { name: string; art: React.ReactNode; mini: React.ReactNode }[] = [
  {
    name: "App Store window",
    art: (
      <g>
        <rect width="76" height="46" fill="#fff" />
        <rect width="15" height="46" fill="#ece6ea" />
        <circle cx="2" cy="2" r="1" fill="#e55" />
        <path d="M3 8h8M3 12h6M3 16h6M3 20h6" stroke="#cfc8cc" />
        <path d="M18 5l6-2-1 7-6 2z" fill="#4a7ff0" />
        <path d="M27 5h21" stroke="#555" strokeWidth="1.5" />
        <rect x="26" y="9" width="6" height="2.5" rx="1" fill="#1f7cf0" />
        <path d="M20 15h3M29 15h3M39 15h3M48 15h3M57 15h3M67 15h3" stroke="#aaa" strokeWidth="2" />
        <rect x="17" y="19" width="27" height="17" fill="#2f86e0" />
        <path d="M17 30l8-3 8-4 11 5v5l-12 2-15-1z" fill="#7a6a4a" />
        <rect x="46" y="19" width="27" height="17" fill="#2f86e0" />
        <path d="M52 26h16v7H52z" fill="#dfe6ee" />
        <path d="M17 41h32M17 44h28" stroke="#bbb" />
      </g>
    ),
    mini: <g><T fill="url(#g-store)" /><AStore /></g>,
  },
  {
    name: "Sample Paper 0 MSA602",
    art: (
      <g>
        <rect y="2" width="76" height="42" fill="#f2f0f1" />
        <rect y="5" width="18" height="39" fill="#e0d8dc" />
        <path d="M2 9h10M2 12h8" stroke="#b9b0b5" />
        <rect x="18" y="5" width="58" height="39" fill="#b3a6a8" />
        <rect x="20.5" y="7" width="53" height="37" fill="#97c95e" stroke="#1c1c1c" />
        <path d="M26 9h38M33 23h27M37 26h18M38 28h16M39 31h14" stroke="#4c6b32" />
      </g>
    ),
    mini: <PreviewArt />,
  },
  {
    name: "Word document",
    art: (
      <g>
        <rect width="76" height="46" fill="#f3f3f3" />
        <rect width="76" height="2" fill="#2b579a" />
        <path d="M2 4h50M2 7h44M50 7h22" stroke="#9ab" strokeWidth="1.5" strokeDasharray="3 1" />
        <rect x="10" y="9" width="56" height="37" fill="#fff" />
        <path d="M15 12h45M15 14h16M17 17h43M15 19h44M15 22h40M27 24h14M17 26h43M15 29h44M15 31h42M15 34h44M15 36h30" stroke="#999" strokeDasharray="4 1" />
      </g>
    ),
    mini: <g><T fill="#fff" /><WordMark /></g>,
  },
  {
    name: "Photos window",
    art: (
      <g>
        <rect y="1" width="76" height="44" fill="#fff" />
        <rect y="1" width="11" height="44" fill="#dcd2d8" />
        <path d="M2 6h6M2 10h6M2 14h6M2 18h6M2 22h6M2 26h6" stroke="#a99" />
        <path d="M11 4h65" stroke="#e8e8e8" strokeWidth="3" />
        <path d="M12 7h64" stroke="#6d93bd" />
        <path d="M13 9v32" stroke="#9ab0c0" strokeWidth="2" strokeDasharray="1 1" />
        <path d="M22 10h16M22 12h16M22 15h16M22 18h10M30 24h10M22 27h24M22 32h14M22 35h14M22 38h14" stroke="#999" strokeDasharray="3 2" />
        <path d="M11 43h65" stroke="#4b6fa8" strokeWidth="2.5" strokeDasharray="3 1" />
      </g>
    ),
    mini: <g><T fill="#fff" /><Flower /></g>,
  },
];

function Dock() {
  return (
    <div className="flex h-[102px] shrink-0 items-start self-center rounded-[28px] border-2 border-white/25 bg-[linear-gradient(100deg,#5f7b9f_0%,#6a7cab_25%,#7a79aa_40%,#7d78a8_60%,#8a73a0_85%,#a06c95_100%)] pl-4 pr-[15px] pt-[14px]">
      <div className="flex gap-[19px]">
        {APPS.map((a) => (
          <DockApp key={a.name} app={a} />
        ))}
      </div>
      <div className="ml-[29px] mr-[27px] h-[74px] w-[2px] shrink-0 bg-[#4b3a70]/80" />
      <div className="flex gap-5">
        {APPS2.map((a) => (
          <DockApp key={a.name} app={a} />
        ))}
        <button aria-label="SPSS Statistics" className="relative size-16 shrink-0">
          <svg viewBox="0 0 80 80" className="-m-2 size-20 max-w-none">
            <circle cx="40" cy="40" r="39" fill="url(#g-sigma)" stroke="#2c5a92" strokeWidth="1.5" />
            <text x="30" y="58" textAnchor="middle" fontSize="62" fill="#fff" fontFamily="Liberation Serif, serif">Σ</text>
            <text x="58" y="41" textAnchor="middle" fontSize="34" fill="#fff" fontFamily="Liberation Serif, serif">α</text>
            <text x="56" y="70" textAnchor="middle" fontSize="28" fill="#fff" fontFamily="Liberation Serif, serif">÷</text>
          </svg>
          <Dot />
        </button>
      </div>
      <div className="ml-[27px] mr-[20px] h-[74px] w-[2px] shrink-0 bg-[#4b3a70]/80" />
      <div className="flex gap-2 pt-[8px]">
        {THUMBS.map((t) => (
          <button key={t.name} aria-label={t.name} className="relative h-[46px] w-[76px] shrink-0">
            <svg viewBox="0 0 76 46" className="h-[46px] w-[76px]">{t.art}</svg>
            <svg viewBox="0 0 64 64" className="absolute left-[49px] top-[35px] size-6 overflow-visible">{t.mini}</svg>
          </button>
        ))}
      </div>
      <button aria-label="Trash" className="-mt-2 ml-4 shrink-0">
        <svg viewBox="0 0 58 76" className="h-[76px] w-[58px]">
          <path d="M3 12 12 3l8 5 9-6 8 5 9-5 8 11-3 6H6z" fill="#e9e9e9" stroke="#8b8b8b" />
          <path d="M12 14l7-6 5 7zM30 8l8-3 4 9-7 2zM42 13l6-4 3 6z" fill="#3b4654" />
          <path d="M22 13l6-2 3 6zM36 16l5-2 2 3z" fill="#c4703c" />
          <path d="M1 11c2 5 12 7 28 7s26-2 28-7l-7 57c-1 9-41 9-42 0z" fill="url(#g-trash)" fillOpacity=".93" />
          <path d="M1 11c2 5 12 7 28 7s26-2 28-7" fill="none" stroke="#fff" strokeWidth="2" />
          <path d="M18 30l5 36M38 28l-4 38M28 24c10 4 16 4 22 1" stroke="#fafafa" strokeWidth="3" opacity=".6" fill="none" />
        </svg>
      </button>
    </div>
  );
}

function Tooltip() {
  return (
    <div className={`absolute bottom-[145px] right-[90px] flex h-[53px] w-[376px] items-center justify-center rounded-[10px] border border-[#c9c9c9] bg-[#e4e3e5] text-[27px] text-[#1c1c1c] shadow-[0_2px_8px_rgba(0,0,0,0.3)] ${UI}`}>
      Sample Paper 0 MSA602
      <svg viewBox="0 0 28 18" className="absolute left-[174px] top-[51px] h-[18px] w-7">
        <path d="M0 0h28c-6 2-10 16-14 18C10 16 6 2 0 0z" fill="#e0dfe1" />
      </svg>
    </div>
  );
}

export default function App() {
  return (
    <div className={`relative flex h-screen flex-col overflow-hidden bg-[linear-gradient(90deg,#1b4067_0%,#27426c_30%,#2a4470_70%,#4a4272_100%)] ${SANS}`}>
      <Defs />
      <MenuBar />
      <div className="h-[2px] shrink-0 bg-[linear-gradient(90deg,#cb3d5b_0%,#c03f5e_20%,#3f8fc4_21%,#2f6ba8_100%)]" />
      <div className="flex min-h-0 flex-1 bg-[linear-gradient(90deg,#1b3458,#14243c_50%,#2f6ba8)]">
        <section className="flex min-w-0 flex-1 flex-col overflow-hidden rounded-[20px] border-2 border-b-[3px] border-[#b4b4b4] border-b-[#989898] bg-[#eeeeee]">
          <div className="relative flex h-[56px] shrink-0 items-center justify-center border-b-2 border-[#b0b0b0] bg-[linear-gradient(#ebebeb,#d4d4d4)]">
            <div className="absolute left-4 flex gap-4">
              <button aria-label="Close" className="flex size-6 items-center justify-center rounded-full border border-[#d3574c] bg-[#ed6a5e]">
                <span className="size-2 rounded-full bg-[#6b0f0a]" />
              </button>
              <button aria-label="Minimize" className="size-6 rounded-full border border-[#d9a33c] bg-[#f5be4f]" />
              <button aria-label="Zoom" className="size-6 rounded-full border border-[#53a73f] bg-[#61c554]" />
            </div>
            <span className={`text-[27px] font-bold text-[#262626] ${UI}`}>Output1 [Document1] - IBM SPSS Statistics Viewer</span>
          </div>
          <Toolbar />
          <div className="flex min-h-0 flex-1 border-y-2 border-[#666666] border-b-[#8f8f8f] pb-[2px] pl-1 pr-[2px] pt-[2px]">
            <Outline />
            <div className="flex w-[18px] shrink-0 items-center justify-center bg-[#eeeeee]">
              <div className="flex h-5 w-[18px] items-center justify-center border-y-2 border-[#dddddd] bg-[#fafafa]">
                <span className="size-3 rounded-full border-2 border-[#d0d0d0]" />
              </div>
            </div>
            <Output />
          </div>
          <StatusBar />
        </section>
      </div>
      <div className="mb-[10px] mt-[3px] flex shrink-0 flex-col">
        <Dock />
      </div>
      <Tooltip />
    </div>
  );
}
